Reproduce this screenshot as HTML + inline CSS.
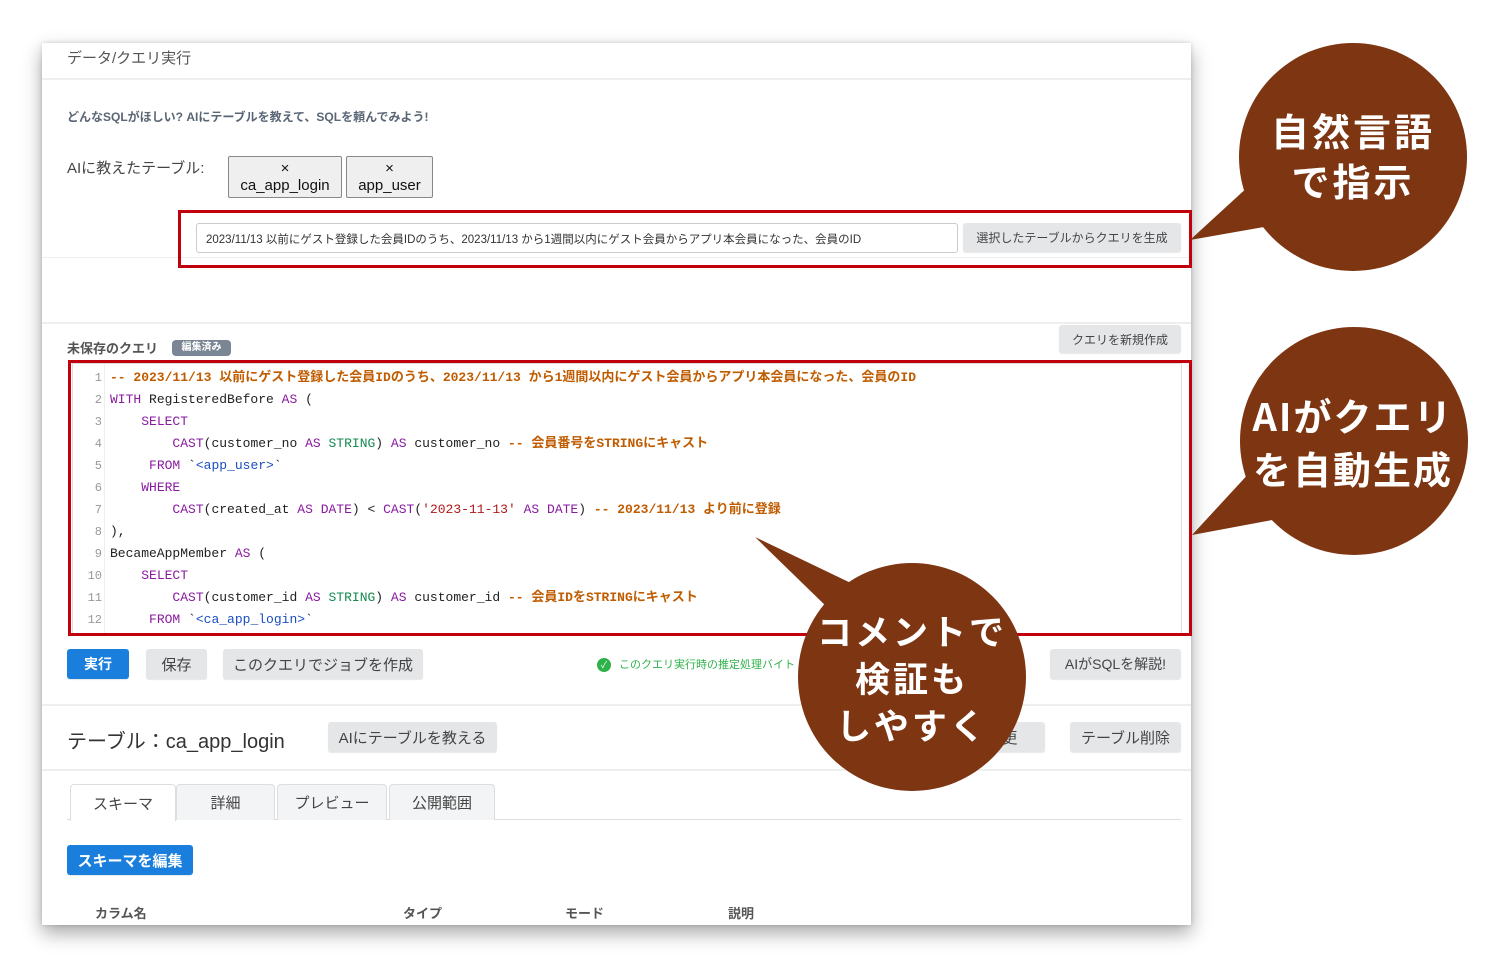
<!DOCTYPE html>
<html><head><meta charset="utf-8"><style>
*{box-sizing:border-box;margin:0;padding:0}
body{width:1502px;height:956px;background:#fff;position:relative;overflow:hidden;font-family:"Liberation Sans","Noto Sans CJK JP",sans-serif;color:#333}
.abs{position:absolute}
.card{left:42px;top:43px;width:1149px;height:882px;background:#fff;box-shadow:0 8px 18px rgba(0,0,0,.35),0 0 4px rgba(0,0,0,.15)}
.hr{position:absolute;left:42px;width:1149px;height:2px;background:#eee}
.btn{position:absolute;background:#e4e6e8;border-radius:3px;color:#444;font-size:14px;display:flex;align-items:center;justify-content:center;box-shadow:0 1px 1px rgba(0,0,0,.1)}
.blue{background:#1a7fdc;color:#fff;font-weight:bold}
.red{position:absolute;border:3px solid #c0000c}
.code{font-family:"Liberation Mono","Noto Sans CJK JP",monospace;font-size:13px;letter-spacing:0}
.ln{position:absolute;left:72px;width:30px;text-align:right;color:#999;font-family:"Liberation Mono",monospace;font-size:12px;line-height:16px;height:16px}
.cl{position:absolute;left:110px;white-space:pre;color:#222;line-height:16px;height:16px}
.c{color:#c05c00;font-weight:bold}.k{color:#8a1aa0}.t{color:#138a4e}.s{color:#b01818}.b{color:#1a4fc0}
.bub{position:absolute;color:#fff;font-weight:bold;text-align:center;font-family:"Noto Sans CJK JP",sans-serif;letter-spacing:3px}
.th{position:absolute;top:903px;font-size:13px;color:#555;font-weight:bold}
.tab{position:absolute;top:784px;height:36px;border:1px solid #ddd;border-bottom:none;background:#f3f4f5;border-radius:4px 4px 0 0;font-size:15px;color:#444;display:flex;align-items:center;justify-content:center}
</style></head><body>
<div class="abs card"></div>
<div class="abs" style="left:67px;top:47px;font-size:15px;color:#555">データ/クエリ実行</div>
<div class="hr" style="top:78px"></div>
<div class="abs" style="left:67px;top:108px;font-size:12px;color:#5a6675;font-weight:bold">どんなSQLがほしい? AIにテーブルを教えて、SQLを頼んでみよう!</div>
<div class="abs" style="left:67px;top:157px;font-size:15px;color:#444">AIに教えたテーブル:</div>
<div class="abs" style="left:228px;top:156px;width:114px;height:42px;border:1px solid #888;border-radius:2px;background:#efefef;text-align:center;font-size:15px;line-height:17px;padding-top:3px;color:#111">×<br>ca_app_login</div>
<div class="abs" style="left:346px;top:156px;width:87px;height:42px;border:1px solid #888;border-radius:2px;background:#efefef;text-align:center;font-size:15px;line-height:17px;padding-top:3px;color:#111">×<br>app_user</div>
<div class="abs" style="left:196px;top:223px;width:762px;height:30px;border:1px solid #ccc;border-radius:3px;font-size:11.5px;color:#333;padding:7px 9px;white-space:nowrap">2023/11/13 以前にゲスト登録した会員IDのうち、2023/11/13 から1週間以内にゲスト会員からアプリ本会員になった、会員のID</div>
<div class="btn" style="left:963px;top:223px;width:218px;height:29px;font-size:12px">選択したテーブルからクエリを生成</div>
<div class="hr" style="top:257px;height:1px"></div>
<div class="red" style="left:178px;top:210px;width:1014px;height:58px"></div>
<div class="hr" style="top:322px"></div>
<div class="abs" style="left:67px;top:338px;font-size:13px;color:#555;font-weight:bold">未保存のクエリ</div>
<div class="abs" style="left:172px;top:340px;width:59px;height:16px;background:#7a8693;border-radius:4px;color:#fff;font-size:10px;text-align:center;line-height:16px;font-weight:bold">編集済み</div>
<div class="btn" style="left:1059px;top:325px;width:122px;height:28px;font-size:12px">クエリを新規作成</div>
<div class="abs" style="left:72px;top:363px;width:1110px;height:272px;border:1px solid #ddd"></div>
<div class="abs code" style="left:0;top:0">
<div class="ln" style="top:370px">1</div><div class="cl" style="top:370px"><span class="c">-- 2023/11/13 以前にゲスト登録した会員IDのうち、2023/11/13 から1週間以内にゲスト会員からアプリ本会員になった、会員のID</span></div>
<div class="ln" style="top:392px">2</div><div class="cl" style="top:392px"><span class="k">WITH</span> RegisteredBefore <span class="k">AS</span> (</div>
<div class="ln" style="top:414px">3</div><div class="cl" style="top:414px">    <span class="k">SELECT</span></div>
<div class="ln" style="top:436px">4</div><div class="cl" style="top:436px">        <span class="k">CAST</span>(customer_no <span class="k">AS</span> <span class="t">STRING</span>) <span class="k">AS</span> customer_no <span class="c">-- 会員番号をSTRINGにキャスト</span></div>
<div class="ln" style="top:458px">5</div><div class="cl" style="top:458px">     <span class="k">FROM</span> `<span class="b">&lt;app_user&gt;</span>`</div>
<div class="ln" style="top:480px">6</div><div class="cl" style="top:480px">    <span class="k">WHERE</span></div>
<div class="ln" style="top:502px">7</div><div class="cl" style="top:502px">        <span class="k">CAST</span>(created_at <span class="k">AS</span> <span class="k">DATE</span>) &lt; <span class="k">CAST</span>(<span class="s">'2023-11-13'</span> <span class="k">AS</span> <span class="k">DATE</span>) <span class="c">-- 2023/11/13 より前に登録</span></div>
<div class="ln" style="top:524px">8</div><div class="cl" style="top:524px">),</div>
<div class="ln" style="top:546px">9</div><div class="cl" style="top:546px">BecameAppMember <span class="k">AS</span> (</div>
<div class="ln" style="top:568px">10</div><div class="cl" style="top:568px">    <span class="k">SELECT</span></div>
<div class="ln" style="top:590px">11</div><div class="cl" style="top:590px">        <span class="k">CAST</span>(customer_id <span class="k">AS</span> <span class="t">STRING</span>) <span class="k">AS</span> customer_id <span class="c">-- 会員IDをSTRINGにキャスト</span></div>
<div class="ln" style="top:612px">12</div><div class="cl" style="top:612px">     <span class="k">FROM</span> `<span class="b">&lt;ca_app_login&gt;</span>`</div>
</div>
<div class="abs" style="left:104px;top:364px;width:1px;height:270px;background:#eee"></div>
<div class="red" style="left:68px;top:360px;width:1124px;height:276px"></div>
<div class="btn blue" style="left:67px;top:649px;width:62px;height:30px">実行</div>
<div class="btn" style="left:146px;top:649px;width:61px;height:30px;font-size:15px">保存</div>
<div class="btn" style="left:223px;top:649px;width:200px;height:30px;font-size:15px">このクエリでジョブを作成</div>
<div class="abs" style="left:597px;top:658px;width:14px;height:14px;border-radius:50%;background:#2fb24a;color:#fff;font-size:9px;text-align:center;line-height:14px">✓</div>
<div class="abs" style="left:619px;top:656px;font-size:11px;color:#2fb24a;white-space:nowrap">このクエリ実行時の推定処理バイト</div>
<div class="btn" style="left:1050px;top:649px;width:131px;height:30px;font-size:14px">AIがSQLを解説!</div>
<div class="hr" style="top:704px"></div>
<div class="abs" style="left:67px;top:725px;font-size:20px;color:#333">テーブル：ca_app_login</div>
<div class="btn" style="left:328px;top:722px;width:169px;height:30px;font-size:15px">AIにテーブルを教える</div>
<div class="btn" style="left:960px;top:722px;width:85px;height:30px;font-size:15px">変更</div>
<div class="btn" style="left:1070px;top:722px;width:111px;height:30px;font-size:15px">テーブル削除</div>
<div class="hr" style="top:769px"></div>
<div class="abs" style="left:67px;top:819px;width:1114px;height:1px;background:#ddd"></div>
<div class="tab" style="left:70px;width:106px;background:#fff;height:37px">スキーマ</div>
<div class="tab" style="left:176px;width:99px">詳細</div>
<div class="tab" style="left:277px;width:110px">プレビュー</div>
<div class="tab" style="left:389px;width:106px">公開範囲</div>
<div class="btn blue" style="left:67px;top:845px;width:126px;height:30px;font-size:15px">スキーマを編集</div>
<div class="th" style="left:95px">カラム名</div>
<div class="th" style="left:403px">タイプ</div>
<div class="th" style="left:565px">モード</div>
<div class="th" style="left:728px">説明</div>
<svg class="abs" style="left:0;top:0" width="1502" height="956">
<g fill="#7d3512">
<ellipse cx="1353" cy="157" rx="114" ry="114"/>
<path d="M1250 185 L1190 240 L1275 225 Z"/>
<ellipse cx="1354" cy="441" rx="114" ry="114"/>
<path d="M1252 470 L1192 535 L1272 520 Z"/>
<ellipse cx="912" cy="677" rx="114" ry="114"/>
<path d="M830 610 L755 537 L855 585 Z"/>
</g></svg>
<div class="bub" style="left:1240px;top:105px;width:226px;font-size:38px;line-height:50px;font-weight:600">自然言語<br>で指示</div>
<div class="bub" style="left:1240px;top:388px;width:226px;font-size:38px;line-height:53px;letter-spacing:2px;font-weight:600">AIがクエリ<br>を自動生成</div>
<div class="bub" style="left:798px;top:607px;width:228px;font-size:35px;line-height:47px;font-weight:600">コメントで<br>検証も<br>しやすく</div>
</body></html>
